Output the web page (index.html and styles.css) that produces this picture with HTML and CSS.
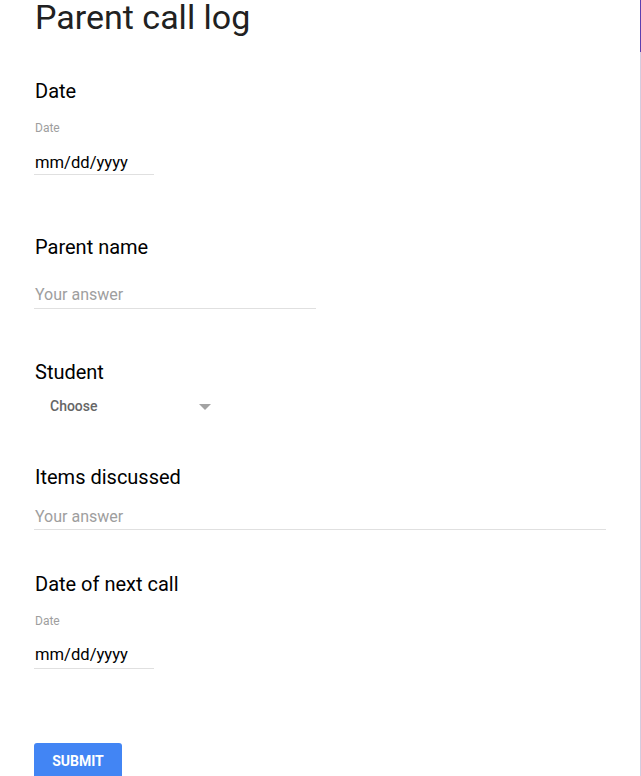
FILE: index.html
```html
<!DOCTYPE html>
<html lang="en">
<head>
<meta charset="utf-8">
<title>Parent call log</title>
<link rel="stylesheet" href="styles.css">
</head>
<body>
<div class="page">
  <h1 class="title">Parent call log</h1>

  <section class="q q-date1">
    <h2 class="q-title">Date</h2>
    <div class="sub-label">Date</div>
    <div class="date-field"><span class="date-text">mm/dd/yyyy</span></div>
  </section>

  <section class="q q-parent">
    <h2 class="q-title">Parent name</h2>
    <div class="text-field short">Your answer</div>
  </section>

  <section class="q q-student">
    <h2 class="q-title">Student</h2>
    <div class="select">
      <span class="select-text">Choose</span>
      <svg class="select-arrow" width="12" height="6" viewBox="0 0 12 6"><path d="M0 0h12L6 6z" fill="#a3a3a3"/></svg>
    </div>
  </section>

  <section class="q q-items">
    <h2 class="q-title">Items discussed</h2>
    <div class="text-field long">Your answer</div>
  </section>

  <section class="q q-date2">
    <h2 class="q-title">Date of next call</h2>
    <div class="sub-label">Date</div>
    <div class="date-field"><span class="date-text">mm/dd/yyyy</span></div>
  </section>

  <div class="actions">
    <button class="submit" type="button">SUBMIT</button>
  </div>
</div>
</body>
</html>
```

FILE: styles.css
```css
html, body {
  margin: 0;
  padding: 0;
  background: #ffffff;
}

body {
  font-family: Roboto, "Noto Sans", sans-serif;
  color: #000;
  overflow: hidden;
}

.page {
  position: relative;
  box-sizing: border-box;
  width: 641px;
  min-height: 776px;
  padding: 0 0 0 34px;
  border-right: 1px solid #d3cde0;
}

.page::before {
  content: "";
  position: absolute;
  top: 0;
  right: -1px;
  width: 1px;
  height: 52px;
  background: #5b3fb0;
}

.title {
  margin: 0;
  padding-left: 1px;
  font-size: 34px;
  line-height: 34px;
  font-weight: 400;
  color: #212121;
}

.q {
  display: flex;
  flex-direction: column;
  align-items: flex-start;
}

.q-title {
  margin: 0;
  font-size: 20px;
  line-height: 24px;
  font-weight: 400;
  color: #000;
  padding-left: 1px;
}

.q-date1 { margin-top: 45px; }
.q-parent { margin-top: 60px; }
.q-student { margin-top: 51px; }
.q-items { margin-top: 49px; }
.q-date2 { margin-top: 42px; }

.sub-label {
  font-size: 12px;
  line-height: 16px;
  color: #9e9e9e;
  padding-left: 1px;
}

.q-date1 .sub-label { margin-top: 17px; }
.q-date2 .sub-label { margin-top: 17px; }

.date-field {
  box-sizing: border-box;
  width: 120px;
  border-bottom: 1px solid #e0e0e0;
  padding-left: 1px;
}

.q-date1 .date-field { margin-top: 17px; height: 22px; }
.q-date2 .date-field { margin-top: 16px; height: 24px; }

.date-text {
  font-family: "Liberation Sans Narrow", Roboto, sans-serif;
  font-size: 16.6px;
  line-height: 20px;
  color: #000;
  display: block;
}

.text-field {
  box-sizing: border-box;
  font-size: 16px;
  line-height: 20px;
  color: #9e9e9e;
  border-bottom: 1px solid #e0e0e0;
  padding-left: 1px;
}

.text-field.short {
  width: 282px;
  margin-top: 26px;
  height: 24px;
}

.text-field.long {
  width: 572px;
  margin-top: 18px;
  height: 23px;
}

.select {
  box-sizing: border-box;
  width: 193px;
  margin-top: 12px;
  padding: 0 16px;
  display: flex;
  align-items: center;
  justify-content: space-between;
  height: 20px;
}

.select-text {
  font-size: 14px;
  line-height: 20px;
  font-weight: 500;
  color: #666666;
}

.select-arrow {
  display: block;
  margin-top: 2px;
}

.actions {
  margin-top: 74px;
}

.submit {
  display: block;
  width: 88px;
  height: 36px;
  border: none;
  border-radius: 3px;
  background: #4285f4;
  color: #fff;
  font-family: Roboto, sans-serif;
  font-size: 14px;
  font-weight: 700;
  line-height: 36px;
  padding: 0;
  text-align: center;
}
```
